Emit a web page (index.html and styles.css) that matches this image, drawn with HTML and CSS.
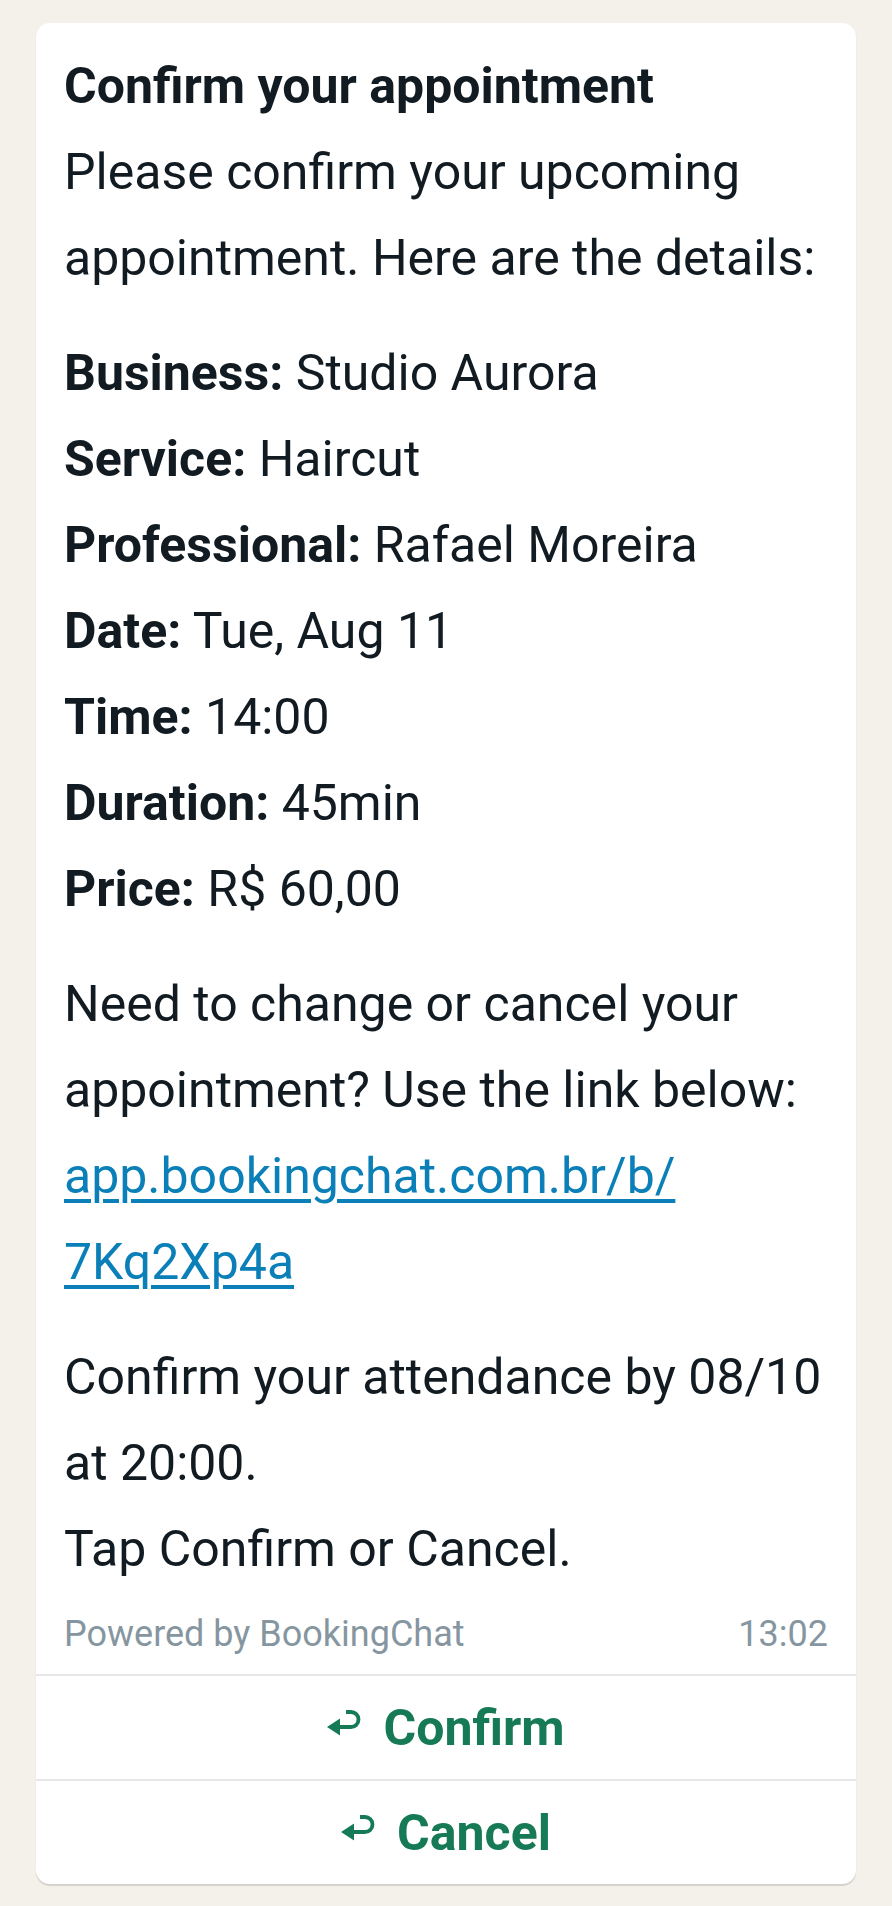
FILE: index.html
```html
<!DOCTYPE html>
<html lang="en">
<head>
  <meta charset="UTF-8">
  <title>Confirm your appointment</title>
  <link rel="stylesheet" href="styles.css">
</head>
<body>

  <div class="bubble">
    <div class="message">
      <h1>Confirm your appointment</h1>
      <p>Please confirm your upcoming appointment. Here are the details:</p>

      <p class="details">
        <strong>Business:</strong> Studio Aurora<br>
        <strong>Service:</strong> Haircut<br>
        <strong>Professional:</strong> Rafael Moreira<br>
        <strong>Date:</strong> Tue, Aug 11<br>
        <strong>Time:</strong> 14:00<br>
        <strong>Duration:</strong> 45min<br>
        <strong>Price:</strong> R$ 60,00
      </p>

      <p>Need to change or cancel your appointment? Use the link below: <a href="#">app.bookingchat.com.br/b/<wbr>7Kq2Xp4a</a></p>

      <p>Confirm your attendance by 08/10 at 20:00.<br>Tap Confirm or Cancel.</p>

      <div class="meta">
        <span>Powered by BookingChat</span>
        <span>13:02</span>
      </div>
    </div>

    <div class="actions">
      <button class="reply">
        <svg class="reply-icon" viewBox="0 0 35 27" width="35" height="27">
          <path d="M10 18 H24 A7.5 7.5 0 0 0 24 3 H19" fill="none" stroke="currentColor" stroke-width="3.8"/>
          <path d="M0 18 L13 9.5 L13 26.5 Z" fill="currentColor"/>
        </svg>
        Confirm
      </button>
      <button class="reply">
        <svg class="reply-icon" viewBox="0 0 35 27" width="35" height="27">
          <path d="M10 18 H24 A7.5 7.5 0 0 0 24 3 H19" fill="none" stroke="currentColor" stroke-width="3.8"/>
          <path d="M0 18 L13 9.5 L13 26.5 Z" fill="currentColor"/>
        </svg>
        Cancel
      </button>
    </div>
  </div>

</body>
</html>
```

FILE: styles.css
```css
body {
  font-family: Roboto, "Noto Sans", Arial, sans-serif;
  background: #f3f1ea;
  margin: 0;
  padding: 23px 36px 25px;
}
.bubble {
  background-color: #fff;
  border-radius: 14px;
  box-shadow: 0 1.5px 1px rgba(0, 0, 0, 0.13);
  overflow: hidden;
}
.message {
  padding: 20px 28px 18px;
  color: #111b21;
  font-size: 50px;
  line-height: 86px;
}
.message h1 {
  font-size: 50px;
  font-weight: bold;
  margin: 0;
  line-height: 86px;
}
.message p {
  margin: 0 0 29px;
}
.message strong {
  font-weight: bold;
}
.message a {
  color: #0a7fb8;
  text-decoration: underline;
  text-decoration-thickness: 4px;
  text-underline-offset: 6px;
}
.meta {
  display: flex;
  justify-content: space-between;
  margin-top: -9px;
  font-size: 36px;
  line-height: 44px;
  color: #8696a0;
}
.actions {
  display: flex;
  flex-direction: column;
}
.reply {
  display: flex;
  justify-content: center;
  align-items: center;
  gap: 21px;
  height: 105px;
  border: none;
  border-top: 2px solid #e7e7e7;
  background: none;
  color: #177a56;
  font-family: Roboto, "Noto Sans", Arial, sans-serif;
  font-size: 50px;
  font-weight: bold;
  padding: 0;
  cursor: pointer;
}
.reply-icon {
  margin-top: -10px;
}
```
